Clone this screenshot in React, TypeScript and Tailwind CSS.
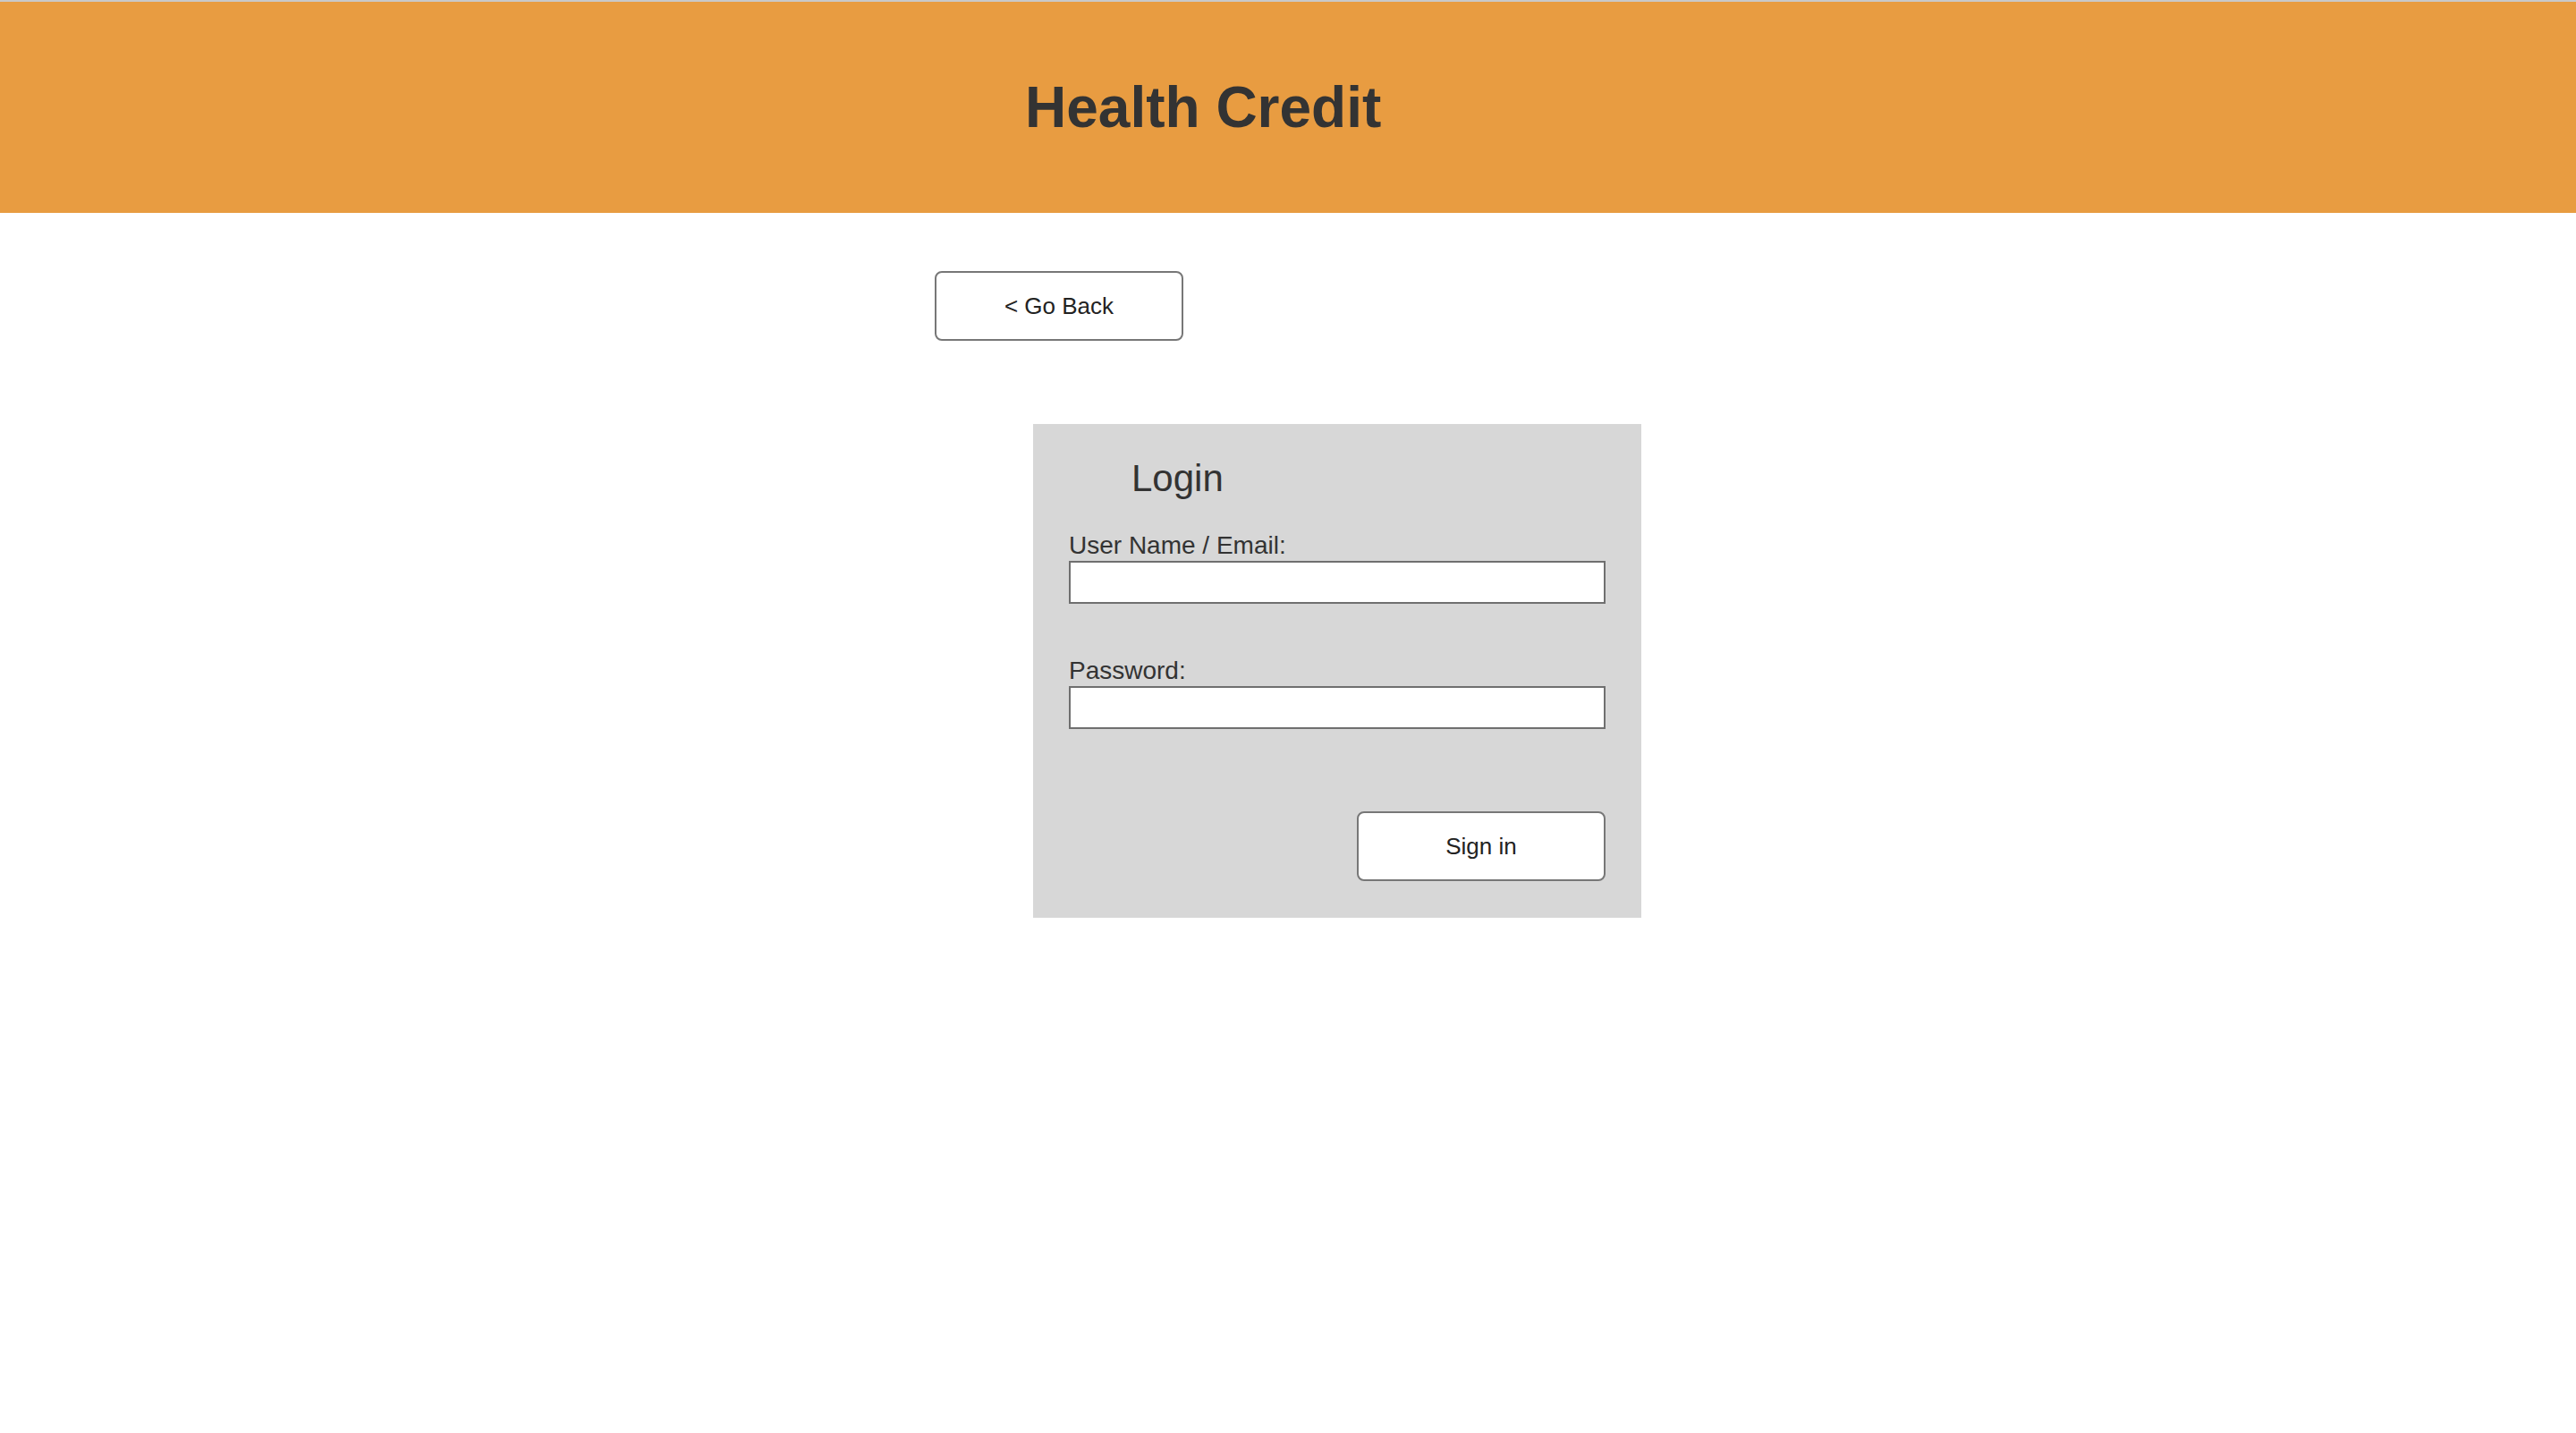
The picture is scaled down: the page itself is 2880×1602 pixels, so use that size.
import React from 'react';

const App: React.FC = () => {
  return (
    <div className="min-h-screen bg-white font-['Liberation_Sans',Arial,sans-serif]">
      <div className="h-[2px] bg-[#c9c9c9]" />
      <header className="h-[236px] bg-[#e89c41] flex items-center">
        <div className="w-[790px] mx-auto pl-[101px]">
          <h1 className="text-[64px] leading-[72px] font-bold text-[#333333]">Health Credit</h1>
        </div>
      </header>

      <main className="w-[790px] mx-auto pt-[65px]">
        <button
          type="button"
          className="w-[278px] h-[78px] bg-white border-2 border-[#777777] rounded-[8px] text-[26px] text-[#222222]"
        >
          &lt; Go Back
        </button>

        <div className="flex justify-end mt-[93px]">
          <form className="w-[680px] bg-[#d7d7d7] pt-[37px] pb-[41px] px-[40px]">
            <h2 className="ml-[70px] text-[42px] leading-[48px] text-[#333333]">Login</h2>

            <label className="block mt-[35px] text-[28px] leading-[32px] text-[#333333]">
              User Name / Email:
            </label>
            <input
              type="text"
              className="block w-[600px] h-[48px] mt-[1px] bg-white border-2 border-[#6f6f6f]"
            />

            <label className="block mt-[59px] text-[28px] leading-[32px] text-[#333333]">
              Password:
            </label>
            <input
              type="password"
              className="block w-[600px] h-[48px] mt-[1px] bg-white border-2 border-[#6f6f6f]"
            />

            <div className="flex justify-end mt-[92px]">
              <button
                type="submit"
                className="w-[278px] h-[78px] bg-white border-2 border-[#777777] rounded-[8px] text-[26px] text-[#222222]"
              >
                Sign in
              </button>
            </div>
          </form>
        </div>
      </main>
    </div>
  );
};

export default App;
